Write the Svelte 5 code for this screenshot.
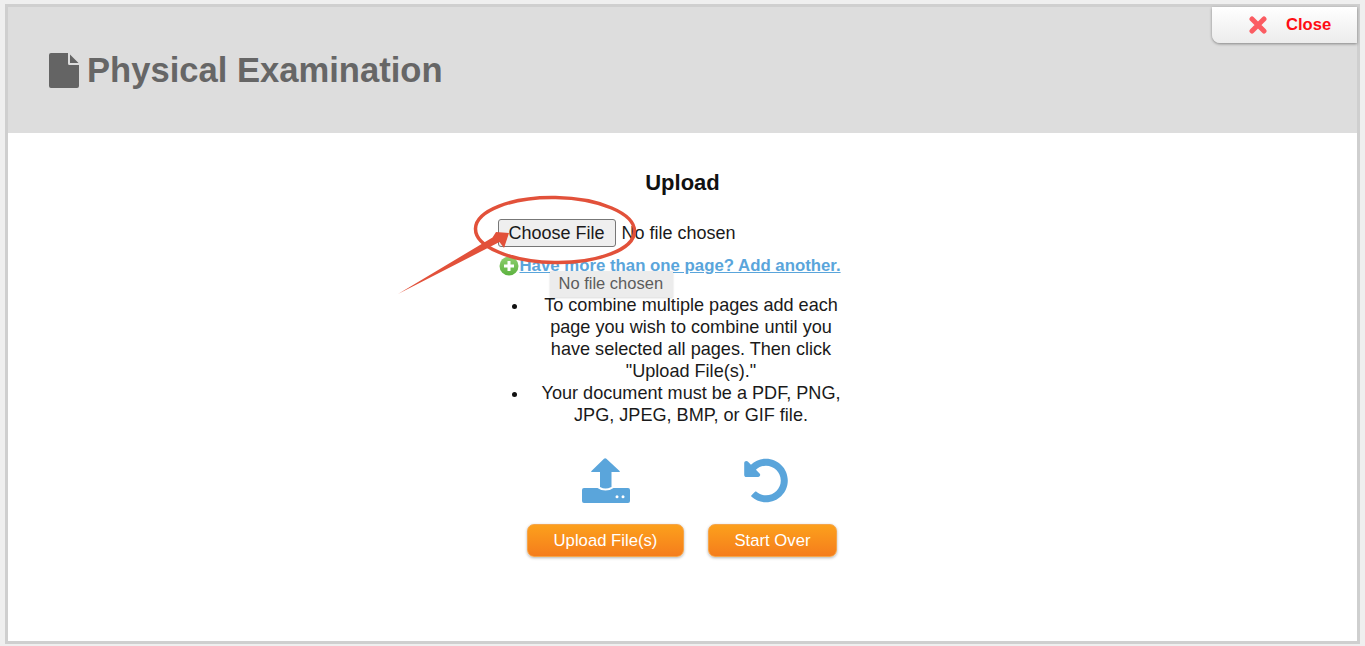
<script>
  const tips = [
    'To combine multiple pages add each page you wish to combine until you have selected all pages. Then click "Upload File(s)."',
    'Your document must be a PDF, PNG, JPG, JPEG, BMP, or GIF file.'
  ];
</script>

<div class="page">
  <div class="frame">
    <header class="head">
      <svg class="file-icon" viewBox="0 0 30 35" aria-hidden="true">
        <path d="M2 0H19V10.500Q19 12 20.500 12H30V33Q30 35 28 35H2Q0 35 0 33V2Q0 0 2 0Z" />
        <path d="M21 1.500L29.500 10H21Z" />
      </svg>
      <h1>Physical Examination</h1>
    </header>

    <button class="close" type="button">
      <svg viewBox="0 0 18 18" aria-hidden="true">
        <path d="M3 3L15 15M15 3L3 15" />
      </svg>
      <span>Close</span>
    </button>

    <main class="body">
      <div class="column">
        <h2>Upload</h2>
        <div class="file-row">
          <button class="choose" type="button">Choose File</button>
          <span>No file chosen</span>
        </div>
        <div class="add-row">
          <svg class="plus" viewBox="0 0 20 20" aria-hidden="true">
            <defs>
              <linearGradient id="plusGrad" x1="0" y1="0" x2="0" y2="1">
                <stop offset="0" stop-color="#8fcf6f" />
                <stop offset="1" stop-color="#5cb23f" />
              </linearGradient>
            </defs>
            <circle cx="10" cy="10" r="9.500" fill="url(#plusGrad)" />
            <path d="M8.500 5H11.500V8.500H15V11.500H11.500V15H8.500V11.500H5V8.500H8.500Z" fill="#fff" />
          </svg>
          <a href="#add">Have more than one page? Add another.</a>
          <div class="tooltip">No file chosen</div>
        </div>
        <ul>
          {#each tips as tip}
            <li>{tip}</li>
          {/each}
        </ul>
        <div class="actions">
          <div class="action">
            <svg class="icon" viewBox="0 0 48 45" aria-hidden="true">
              <path d="M22 .800Q23.200 -.300 24.400 .800L37.300 12.800Q38.500 14 37 14H29.500V29Q26 30.500 23.500 30.500Q21 30.500 18 29V14H10Q8.500 14 9.700 12.800Z" />
              <path d="M2 30H15.500Q19 32.500 23.500 32.500Q28 32.500 31.500 30H46Q48 30 48 32V43Q48 45 46 45H2Q0 45 0 43V32Q0 30 2 30Z" />
              <circle cx="35" cy="38.800" r="1.500" fill="#fff" />
              <circle cx="41" cy="38.800" r="1.500" fill="#fff" />
            </svg>
            <button class="orange wide" type="button">Upload File(s)</button>
          </div>
          <div class="action">
            <svg class="icon undo" viewBox="0 0 512 512" aria-hidden="true">
              <path d="M255.545 8c-66.269.119-126.438 26.233-170.871 68.685L48.971 40.971C33.851 25.851 8 36.559 8 57.941V192c0 13.255 10.745 24 24 24h134.059c21.382 0 32.090-25.851 16.971-40.971l-41.750-41.750c30.864-28.899 70.801-44.907 113.240-45.273 92.459-.798 170.390 74.023 169.590 169.590C423.956 347.190 348.065 424 256 424c-40.389 0-78.560-14.415-108.689-40.811-4.743-4.155-11.906-3.902-16.364.555L91.288 423.400c-4.861 4.861-4.621 12.790.482 17.391C135.692 480.399 193.899 504 256 504c136.967 0 248-111.033 248-248C504 119.205 392.740 7.755 255.545 8z" />
            </svg>
            <button class="orange narrow" type="button">Start Over</button>
          </div>
        </div>
      </div>
    </main>
  </div>

  <svg class="annotation" viewBox="0 0 1365 646" aria-hidden="true">
    <ellipse cx="555" cy="230" rx="79.500" ry="32.500" transform="rotate(1 555 230)" />
    <path class="arrow" d="M509 233L504 248L499.500 242L398 294L492.500 237.500L496 232Z" />
  </svg>
</div>

<style>
  :global(body) {
    margin: 0;
    background: #efefef;
  }

  .page {
    position: relative;
    box-sizing: border-box;
    width: 1365px;
    height: 646px;
    padding: 4px 5px 2px;
    overflow: hidden;
    font-family: "Liberation Sans", Arial, sans-serif;
    color: #111;
  }

  .frame {
    position: relative;
    display: flex;
    flex-direction: column;
    box-sizing: border-box;
    height: 100%;
    border: 3px solid #cfcfcf;
    background: #fff;
  }

  .head {
    display: flex;
    align-items: center;
    gap: 8px;
    flex: none;
    box-sizing: border-box;
    height: 126px;
    padding-left: 41px;
    background: #dddddd;
  }

  .file-icon {
    width: 30px;
    height: 35px;
    fill: #646464;
  }

  h1 {
    margin: 0;
    font-size: 34.600px;
    font-weight: 700;
    line-height: 40px;
    color: #666;
  }

  .close {
    position: absolute;
    top: 0;
    right: 0;
    display: flex;
    align-items: center;
    box-sizing: border-box;
    width: 145px;
    height: 36px;
    padding: 0 0 0 37px;
    border: 0;
    border-radius: 0 0 0 8px;
    background: linear-gradient(#ffffff, #ececec);
    box-shadow: 0 1px 3px rgba(0, 0, 0, 0.4);
    font: 700 16.600px "Liberation Sans", Arial, sans-serif;
    color: #ff0d14;
  }

  .close svg {
    width: 18px;
    height: 18px;
    margin-right: 19px;
    fill: none;
    stroke: #fb5c62;
    stroke-width: 5;
    stroke-linecap: round;
  }

  .body {
    flex: 1;
    display: flex;
    justify-content: center;
    padding-top: 37px;
  }

  .column {
    width: 370px;
  }

  h2 {
    margin: 0;
    font-size: 22px;
    font-weight: 700;
    line-height: 26px;
    text-align: center;
    color: #111;
  }

  .file-row {
    display: flex;
    align-items: center;
    gap: 6px;
    margin-top: 23px;
    font-size: 18px;
    color: #1a1a1a;
  }

  .choose {
    box-sizing: border-box;
    width: 118px;
    height: 28px;
    padding: 0;
    border: 1px solid #777;
    border-radius: 3px;
    background: #efefef;
    font: 18px "Liberation Sans", Arial, sans-serif;
    color: #1a1a1a;
  }

  .add-row {
    position: relative;
    display: flex;
    align-items: center;
    height: 22px;
    margin-top: 7px;
  }

  .plus {
    width: 20px;
    height: 20px;
    margin-left: 1px;
    margin-top: 1px;
    flex: none;
  }

  .add-row a {
    margin-left: 1px;
    margin-top: 1px;
    font-size: 16.800px;
    font-weight: 700;
    line-height: 22px;
    color: #5aa5db;
    white-space: nowrap;
  }

  .tooltip {
    position: absolute;
    top: 17px;
    left: 52px;
    box-sizing: border-box;
    width: 123px;
    height: 26px;
    padding-left: 9px;
    background: #ececec;
    box-shadow: 0 1px 2px rgba(0, 0, 0, 0.15);
    font-size: 16.500px;
    line-height: 25px;
    color: #5c5c5c;
    white-space: nowrap;
  }

  ul {
    box-sizing: border-box;
    width: 317px;
    margin: 18px 0 0 31.500px;
    padding: 0;
    font-size: 18.100px;
    line-height: 22px;
    text-align: center;
    color: #1a1a1a;
  }

  li {
    padding-left: 7px;
  }

  li::marker {
    color: #111;
  }

  .actions {
    display: flex;
    gap: 24px;
    margin-top: 32px;
    padding-left: 29.500px;
  }

  .action {
    display: flex;
    flex-direction: column;
    align-items: center;
    gap: 21px;
  }

  .icon {
    width: 48px;
    height: 45px;
    fill: #5aa5db;
  }

  .undo {
    margin-right: 14px;
  }

  .orange {
    box-sizing: border-box;
    height: 33px;
    padding: 0;
    border: 1px solid #f5a54a;
    border-radius: 7px;
    background: linear-gradient(#fca01c, #f57d1c);
    box-shadow: 0 1px 3px rgba(0, 0, 0, 0.3);
    font: 16.700px "Liberation Sans", Arial, sans-serif;
    color: #fff;
  }

  .wide {
    width: 157px;
  }

  .narrow {
    width: 129px;
  }

  .annotation {
    position: absolute;
    inset: 0;
    width: 1365px;
    height: 646px;
    pointer-events: none;
  }

  .annotation ellipse {
    fill: none;
    stroke: #e2513a;
    stroke-width: 3.500;
  }

  .arrow {
    fill: #e2513a;
  }
</style>
